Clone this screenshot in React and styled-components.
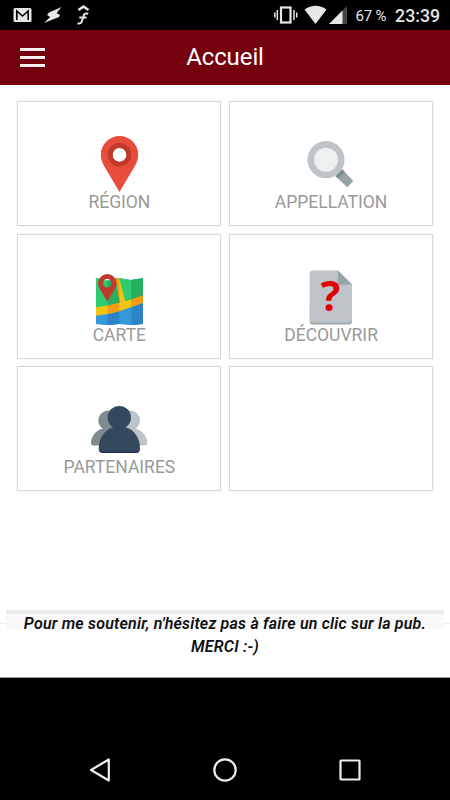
import React from "react";
import styled, { createGlobalStyle } from "styled-components";

const GlobalStyle = createGlobalStyle`
  * {
    box-sizing: border-box;
  }
  body {
    margin: 0;
    background-color: #000;
    font-family: Roboto, "Liberation Sans", sans-serif;
  }
`;
const Screen = styled.div`
  width: 450px;
  height: 800px;
  display: flex;
  flex-direction: column;
  overflow: hidden;
  background-color: #000;
`;
const StatusBar = styled.div`
  height: 30px;
  display: flex;
  align-items: center;
  justify-content: space-between;
  padding: 0 10px 0 13px;
  color: #e6e6e6;
`;
const StatusGroup = styled.div`
  display: flex;
  align-items: center;
`;
const StatusIcon = styled.svg`
  display: block;
  flex: none;
  width: ${(props) => props.$width}px;
  height: 30px;
`;
const Battery = styled.span`
  width: 40px;
  font-size: 15px;
  letter-spacing: -0.2px;
  line-height: 30px;
  white-space: nowrap;
  padding: 1px 0 0 0.5px;
`;
const Clock = styled.span`
  font-size: 17.7px;
  font-weight: 500;
  line-height: 30px;
  padding-top: 1px;
`;
const Header = styled.header`
  height: 55px;
  display: grid;
  grid-template-columns: 65px 1fr 65px;
  align-items: center;
  background-color: #75010e;
  color: #fff;
`;
const MenuButton = styled.button`
  display: flex;
  flex-direction: column;
  gap: 5px;
  width: 25px;
  padding: 0;
  margin: 0 0 0 20px;
  border: none;
  background: none;
`;
const MenuLine = styled.span`
  height: 2.7px;
  background-color: #f8f0f1;
`;
const Title = styled.h1`
  margin: 0;
  font-size: 24px;
  letter-spacing: -0.1px;
  font-weight: 400;
  line-height: 55px;
  text-align: center;
`;
const Page = styled.main`
  height: 593px;
  display: flex;
  flex-direction: column;
  justify-content: space-between;
  background-color: #fff;
  border-bottom: 1px solid #999;
`;
const Grid = styled.div`
  display: grid;
  grid-template-columns: 204px 204px;
  grid-auto-rows: 125px;
  column-gap: 7.7px;
  row-gap: 7.5px;
  padding: 16px 17.4px 0;
`;
const Card = styled.div`
  display: flex;
  flex-direction: column;
  align-items: center;
  padding-top: 28px;
  border: 1px solid #d8d8d8;
  box-shadow: 0 0 1px #ddd;
`;
const CardIcon = styled.svg`
  display: block;
  flex: none;
  width: 64px;
  height: 62px;
`;
const Label = styled.span`
  font-size: 17.5px;
  font-weight: 400;
  line-height: 20px;
  color: #999;
`;
const Footer = styled.footer`
  height: 67px;
  display: grid;
  grid-template-columns: 6px 1fr 6px;
  grid-template-rows: 19px 1fr;
`;
const SideLine = styled.span`
  height: 1px;
  margin-top: 13px;
  background-color: #eee;
`;
const Banner = styled.div`
  border-top: 4px solid #ebebeb;
  background-color: #f8f8f8;
`;
const Message = styled.p`
  margin: -1px 0 0;
  font-size: 16px;
  font-weight: 600;
  font-style: italic;
  letter-spacing: 0.2px;
  line-height: 22.5px;
  text-align: center;
  white-space: nowrap;
  color: #111;
`;
const NavBar = styled.nav`
  flex: 1;
  display: flex;
  align-items: flex-end;
  justify-content: space-between;
  padding: 0 85px 15px;
`;
const NavIcon = styled.svg`
  display: block;
  width: 30px;
  height: 30px;
  fill: none;
  stroke: #eee;
  stroke-width: 2.2;
  stroke-linejoin: round;
`;

const PinIcon = () => (
  <CardIcon viewBox="-0.5 0 64 62">
    <path
      d="M32 6a18.7 18.7 0 0 0-18.7 18.7c0 4 1.2 7.2 3 10.8L32 62l15.7-26.5c1.8-3.6 3-6.8 3-10.8A18.7 18.7 0 0 0 32 6z"
      fill="#e84c3d"
    />
    <circle cx="32" cy="24.7" r="11.8" fill="#c03a2b" />
    <circle cx="32" cy="24.9" r="7.3" fill="#fff" stroke="#b01508" strokeWidth="0.8" />
  </CardIcon>
);

const SearchIcon = () => (
  <CardIcon viewBox="0 0 64 62">
    <path d="M43.7 39.7L54.3 51l-6 6.3L37 46.7z" fill="#95a5a5" />
    <path d="M43.2 39.2l2.5 2.6-6.6 6.8-2.8-2.5z" fill="#7f8c8d" />
    <circle cx="27" cy="29.7" r="18.6" fill="#bdc3c7" />
    <circle cx="27" cy="29.7" r="12" fill="#ecf0f1" />
  </CardIcon>
);

const MapIcon = () => (
  <CardIcon viewBox="-0.5 0 64 62">
    <path d="M8.5 15.3L20 17l11.8-1.7L43.8 17l11.7-1.7V61l-11.7 1.3L31.8 61 20 62.3 8.5 61z" fill="#3598db" />
    <path d="M20 17l11.8-1.7V61L20 62.3zM43.8 17l11.7-1.7V61l-11.7 1.3z" fill="#2e83c4" />
    <path d="M8.5 15.3L20 17l11.8-1.7L43.8 17l11.7-1.7V34l-11.7 4-12 3.5L20 44.3 8.5 45.5z" fill="#2ecc70" />
    <path d="M20 17l11.8-1.7v26.2L20 44.3zM43.8 17l11.7-1.7V34l-11.7 4z" fill="#27ae61" />
    <path d="M28.3 15.8l3.5-.5 6.2 24-5.2 1.6z" fill="#f1c40f" />
    <path d="M28.3 15.8l3.5-.5v22.3z" fill="#f39c11" />
    <path d="M8.5 44.3L20 42.5l11.8-2.4 12-3.7 11.7-4v7.4l-11.7 4.3-12 4.1L20 51l-11.5 1.7z" fill="#f1c40f" />
    <path d="M20 42.5l11.8-2.4v8.1L20 51zM43.8 36.4l11.7-4v7.4l-11.7 4.3z" fill="#f39c11" />
    <path
      d="M19.8 11a9.2 9.2 0 0 0-9.2 9.2c0 2.2.7 3.6 1.5 5.2l7.7 13.2 7.7-13.2c.8-1.6 1.5-3 1.5-5.2a9.2 9.2 0 0 0-9.2-9.2zm0 5.2a4.1 4.1 0 1 1 0 8.2 4.1 4.1 0 0 1 0-8.2z"
      fill="#c03a2b"
      fillRule="evenodd"
    />
    <path d="M16.8 17.2a4.2 4.2 0 0 1 6 0z" fill="#fff" />
  </CardIcon>
);

const HelpIcon = () => (
  <CardIcon viewBox="0 0 64 62">
    <rect x="10.7" y="40" width="42.3" height="21.5" rx="3" fill="#95a5a5" />
    <path d="M13.7 7.5H39l14 14v35.3a3 3 0 0 1-3 3H13.7a3 3 0 0 1-3-3V10.5a3 3 0 0 1 3-3z" fill="#bdc3c7" />
    <path d="M39 7.5l14 14H39z" fill="#95a5a5" />
    <text
      x="31.6"
      y="48.2"
      textAnchor="middle"
      fontFamily="Open Sans, sans-serif"
      fontSize="41"
      fontWeight="700"
      fill="#dd0004"
    >
      ?
    </text>
  </CardIcon>
);

const PeopleIcon = () => (
  <CardIcon viewBox="-0.5 0 64 62">
    <g fill="#7f8c8d">
      <circle cx="20.8" cy="25.5" r="10" />
      <path d="M15 33.5C7.5 36 3.5 42 3.5 48q0 2.5 2.5 2.5h22V33z" />
    </g>
    <g fill="#bdc3c7">
      <circle cx="42.5" cy="25.5" r="10" />
      <path d="M48 33.5C55.5 36 59.7 42 59.7 48q0 2.5-2.5 2.5H35V33z" />
    </g>
    <path d="M24.5 32.5h14.6C47 35.5 52.5 43 52.5 53.5q0 4.3-4.3 4.3H15.5q-4.3 0-4.3-4.3C11.2 43 17 35.5 24.5 32.5z" fill="#34495e" />
    <path d="M11.3 54.5q.5 2.3 4.2 2.3h32.7q3.7 0 4.2-2.3-.2 3.4-4.2 3.4H15.5q-4 0-4.2-3.4z" fill="#202f4a" />
    <circle cx="31.8" cy="22.6" r="11.7" fill="#34495e" />
  </CardIcon>
);

const items = [
  { label: "RÉGION", Icon: PinIcon },
  { label: "APPELLATION", Icon: SearchIcon },
  { label: "CARTE", Icon: MapIcon },
  { label: "DÉCOUVRIR", Icon: HelpIcon },
  { label: "PARTENAIRES", Icon: PeopleIcon },
];

function App() {
  return (
    <>
      <GlobalStyle />
      <Screen>
        <StatusBar>
          <StatusGroup>
            <StatusIcon $width={80} viewBox="0 0 80 30">
              <rect x="0.5" y="8" width="18" height="14" rx="1.5" fill="#e6e6e6" />
              <path d="M3.8 20v-9l5.7 5 5.7-5v9" fill="none" stroke="#000" strokeWidth="1.6" />
              <path d="M48.5 7L36 12.5l-2 2.5 3.2 2L31 23l15-6 1-2-3.4-2z" fill="#e6e6e6" />
              <g fill="none" stroke="#e6e6e6">
                <path d="M65.5 10l5-3.5 5 3.5" strokeWidth="2.6" />
                <path d="M75.2 13.8c-2.7-1-4-.2-4.8 2.7L69 21c-.6 2-1.8 3-4.500 2.500M66.300 17.500h7.200" strokeWidth="2" />
              </g>
            </StatusIcon>
          </StatusGroup>
          <StatusGroup>
            <StatusIcon $width={82} viewBox="0 0 82 30">
              <rect x="8" y="7.5" width="9.5" height="15" fill="none" stroke="#e6e6e6" strokeWidth="2.2" />
              <path d="M4.3 10v10M1.8 12.5v5M21 10v10M23.7 12.5v5" stroke="#e6e6e6" strokeWidth="1.5" />
              <path d="M31.5 9.5q11-7.5 22 0L42.5 24z" fill="#e6e6e6" />
              <path d="M56 24l18-18v18z" fill="#444" />
              <path d="M56 24L69.5 10.5V24z" fill="#e6e6e6" />
            </StatusIcon>
            <Battery>67 %</Battery>
            <Clock>23:39</Clock>
          </StatusGroup>
        </StatusBar>
        <Header>
          <MenuButton aria-label="Menu">
            <MenuLine />
            <MenuLine />
            <MenuLine />
          </MenuButton>
          <Title>Accueil</Title>
        </Header>
        <Page>
          <Grid>
            {items.map(({ label, Icon }) => (
              <Card key={label}>
                <Icon />
                <Label>{label}</Label>
              </Card>
            ))}
            <Card />
          </Grid>
          <Footer>
            <SideLine />
            <Banner>
              <Message>
                Pour me soutenir, n'hésitez pas à faire un clic sur la pub.
                <br />
                MERCI :-)
              </Message>
            </Banner>
            <SideLine />
          </Footer>
        </Page>
        <NavBar>
          <NavIcon viewBox="0 0 30 30">
            <path d="M6 15L23.8 4.5v21z" />
          </NavIcon>
          <NavIcon viewBox="0 0 30 30">
            <circle cx="15" cy="15" r="10.7" />
          </NavIcon>
          <NavIcon viewBox="0 0 30 30">
            <rect x="5.5" y="5.5" width="19" height="19" rx="0.5" />
          </NavIcon>
        </NavBar>
      </Screen>
    </>
  );
}

export default App;
